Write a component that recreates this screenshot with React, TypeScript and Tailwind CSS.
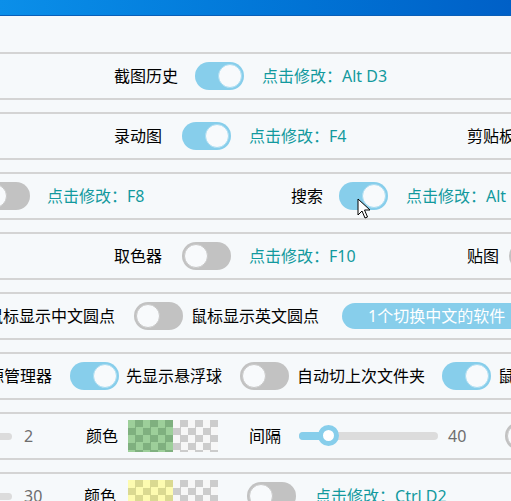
import React from "react";

const FONT = { fontFamily: '"Noto Sans", "Noto Sans CJK SC", sans-serif' };

function Toggle({ on, className = "" }: { on: boolean; className?: string }) {
  return on ? (
    <div className={`shrink-0 w-[49px] h-[28px] rounded-full bg-[#87ceeb] flex items-center justify-end pr-[2px] ${className}`}>
      <div className="w-[24px] h-[24px] rounded-full bg-[#f8fafc] border border-[#a9dcf1]" />
    </div>
  ) : (
    <div className={`shrink-0 w-[49px] h-[28px] rounded-full bg-[#c2c2c2] flex items-center justify-start pl-[2px] ${className}`}>
      <div className="w-[24px] h-[24px] rounded-full bg-[#f8fafc] border border-[#c8c8c8]" />
    </div>
  );
}

function Teal({ children, className = "" }: { children: React.ReactNode; className?: string }) {
  return <span className={`shrink-0 text-[16px] leading-[20px] text-[#12999e] ${className}`}>{children}</span>;
}

function Label({ children, className = "" }: { children: React.ReactNode; className?: string }) {
  return <span className={`shrink-0 text-[16px] leading-[20px] text-black ${className}`}>{children}</span>;
}

function Num({ children, className = "" }: { children: React.ReactNode; className?: string }) {
  return <span className={`shrink-0 text-[16px] leading-[20px] text-[#6e6e6e] ${className}`}>{children}</span>;
}

function Card({ children, className = "" }: { children: React.ReactNode; className?: string }) {
  return (
    <div className={`h-[48px] shrink-0 border-y-2 border-[#d4d4d4] flex items-center whitespace-nowrap overflow-hidden ${className}`}>
      {children}
    </div>
  );
}

function Swatch({ kind, className = "" }: { kind: "green" | "yellow"; className?: string }) {
  return (
    <div className={`shrink-0 flex w-[90px] h-[32px] ${className}`}>
      {kind === "green" ? (
        <div className="w-[45px] h-full bg-[image:conic-gradient(#7fb07f_25%,#9dcf9a_0_50%,#7fb07f_0_75%,#9dcf9a_0)] bg-[length:15px_15px]" />
      ) : (
        <div className="w-[45px] h-full bg-[image:conic-gradient(#dad991_25%,#fdfbb0_0_50%,#dad991_0_75%,#fdfbb0_0)] bg-[length:15px_15px]" />
      )}
      <div className="w-[45px] h-full bg-[image:conic-gradient(#cccccc_25%,#f7f7f7_0_50%,#cccccc_0_75%,#f7f7f7_0)] bg-[length:15px_15px]" />
    </div>
  );
}

function StubTrack() {
  return <div className="shrink-0 ml-[-18px] w-[30px] h-[7px] rounded-full bg-[#dcdcdc]" />;
}

export default function App() {
  return (
    <div className="relative w-[511px] h-[501px] overflow-hidden bg-[#f6f9fb]" style={FONT}>
      <div className="h-[16px] bg-gradient-to-r from-[#0b8fe9] to-[#0060c7] border-b border-[#0a5fb8]" />
      <div className="pt-[36px] flex flex-col gap-[12px]">
        {/* Row 1 */}
        <Card className="pl-[114px]">
          <Label>截图历史</Label>
          <Toggle on className="ml-[17px]" />
          <Teal className="ml-[18px]">点击修改：Alt D3</Teal>
        </Card>
        {/* Row 2 */}
        <Card className="pl-[114px]">
          <Label>录动图</Label>
          <Toggle on className="ml-[20px]" />
          <Teal className="ml-[18px] w-[218px]">点击修改：F4</Teal>
          <Label>剪贴板</Label>
        </Card>
        {/* Row 3 */}
        <Card>
          <Toggle on={false} className="ml-[-19px]" />
          <Teal className="ml-[17px] w-[244px]">点击修改：F8</Teal>
          <Label>搜索</Label>
          <Toggle on className="ml-[16px]" />
          <Teal className="ml-[18px]">点击修改：Alt F</Teal>
        </Card>
        {/* Row 4 */}
        <Card className="pl-[114px]">
          <Label>取色器</Label>
          <Toggle on={false} className="ml-[20px]" />
          <Teal className="ml-[18px] w-[218px]">点击修改：F10</Teal>
          <Label>贴图</Label>
          <Toggle on={false} className="ml-[10px]" />
        </Card>
        {/* Row 5 */}
        <Card>
          <Label className="ml-[-13px]">鼠标显示中文圆点</Label>
          <Toggle on={false} className="ml-[19px]" />
          <Label className="ml-[8px]">鼠标显示英文圆点</Label>
          <div className="shrink-0 ml-[23px] h-[26px] rounded-l-full bg-[#87ceeb] pl-[26px] pr-[20px] flex items-center">
            <span className="text-[16px] leading-[20px] text-white">1个切换中文的软件</span>
          </div>
        </Card>
        {/* Row 6 */}
        <Card>
          <Label className="ml-[-28px]">资源管理器</Label>
          <Toggle on className="ml-[18px]" />
          <Label className="ml-[7px]">先显示悬浮球</Label>
          <Toggle on={false} className="ml-[18px]" />
          <Label className="ml-[8px]">自动切上次文件夹</Label>
          <Toggle on className="ml-[17px]" />
          <Label className="ml-[7px]">鼠标中键</Label>
        </Card>
        {/* Row 7 */}
        <Card>
          <StubTrack />
          <Num className="ml-[12px] w-[62px]">2</Num>
          <Label>颜色</Label>
          <Swatch kind="green" className="ml-[10px]" />
          <Label className="ml-[31px]">间隔</Label>
          <div className="relative shrink-0 ml-[18px] w-[139px] h-[8px] rounded-full bg-[#dcdcdc]">
            <div className="absolute left-0 top-0 h-full w-[30px] rounded-l-full bg-[#87ceeb]" />
            <div className="absolute left-[19px] top-[-7px] w-[21px] h-[21px] rounded-full bg-white border-[5px] border-[#87ceeb]" />
          </div>
          <Num className="ml-[10px] w-[57px]">40</Num>
          <Toggle on={false} />
        </Card>
        {/* Row 8 */}
        <Card>
          <StubTrack />
          <Num className="ml-[12px] w-[60px]">30</Num>
          <Label>颜色</Label>
          <Swatch kind="yellow" className="ml-[12px]" />
          <Toggle on={false} className="ml-[29px]" />
          <Teal className="ml-[19px]">点击修改：Ctrl D2</Teal>
        </Card>
      </div>
      {/* mouse cursor */}
      <svg className="absolute left-[357px] top-[198px]" width="14" height="22" viewBox="0 0 14 22">
        <path d="M1 1 L1 17 L5 13 L8 20 L10.5 19 L7.5 12 L13 12 Z" fill="#fff" stroke="#000" strokeWidth="1" strokeLinejoin="miter" />
      </svg>
    </div>
  );
}
